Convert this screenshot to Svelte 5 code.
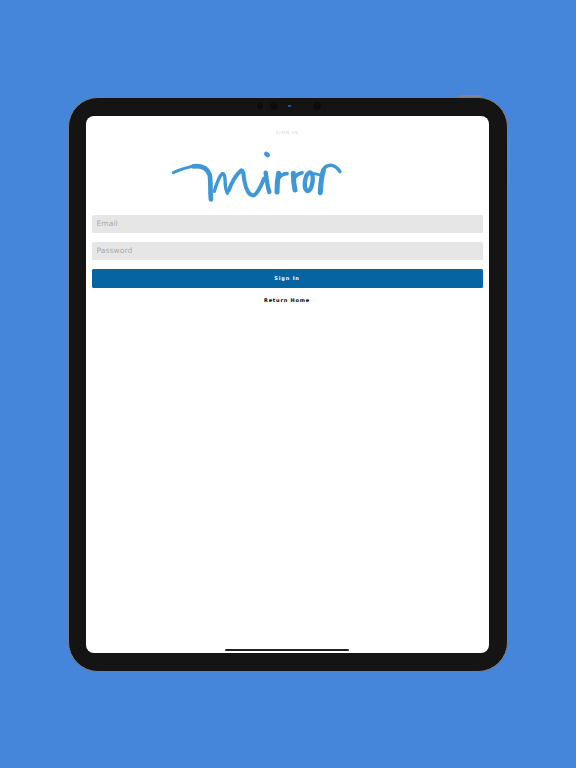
<script lang="ts">
  let email = $state('');
  let password = $state('');
</script>

<main class="page">
  <div class="tablet">
    <div class="btn-top"></div>
    <div class="btn-side one"></div>
    <div class="btn-side two"></div>

    <div class="sensors">
      <span class="cam"></span>
      <span class="cam big"></span>
      <span class="led"></span>
      <span class="cam big far"></span>
    </div>

    <div class="screen">
      <p class="title">SIGN IN</p>

      <svg class="logo" viewBox="0 0 570 210" role="img" aria-label="mirror" fill="none" stroke="#3d97d8" stroke-linecap="round" stroke-linejoin="round">
        <path stroke-width="9" d="M40 98C62 88 84 80 106 78" />
        <path stroke-width="14" d="M100 79C124 76 142 84 149 104C153 126 150 156 153 178" />
        <path stroke-width="10" d="M163 154C170 130 178 108 187 101C196 100 195 122 196 136C197 146 199 154 202 160" />
        <path stroke-width="12" d="M206 152C214 130 226 106 244 91C252 92 250 110 254 126C258 150 268 168 282 166C296 158 304 134 312 116" />
        <path stroke-width="13" d="M317 98C320 118 322 138 328 156" />
        <path stroke-width="14" d="M319 42L323 45" />
        <path stroke-width="15" d="M356 100C352 120 351 138 351 156" />
        <path stroke-width="11" d="M354 116C362 106 370 101 381 101" />
        <path stroke-width="15" d="M400 100C400 118 402 136 405 150" />
        <path stroke-width="11" d="M404 112C410 104 418 100 426 98" />
        <path stroke-width="13" d="M447 99C434 106 430 142 440 152C452 158 460 130 458 108C456 98 450 96 447 99" />
        <path stroke-width="8" d="M456 100C464 100 472 102 482 106" />
        <path stroke-width="15" d="M481 158C482 132 484 112 490 92" />
        <path stroke-width="10" d="M488 92C494 80 504 75 516 76C526 78 534 86 540 95" />
      </svg>

      <form class="form" onsubmit={(e) => e.preventDefault()}>
        <input class="field" type="email" placeholder="Email" bind:value={email} />
        <input class="field" type="password" placeholder="Password" bind:value={password} />
        <button class="submit" type="submit">Sign In</button>
      </form>

      <button class="return" type="button">Return Home</button>

      <div class="home-bar"></div>
    </div>
  </div>
</main>

<style>
  :global(body) {
    margin: 0;
    background: #4585da;
  }

  .page {
    display: flex;
    height: 768px;
    padding: 97px 0 0 68px;
    box-sizing: border-box;
    font-family: "DejaVu Sans", Inter, "Liberation Sans", sans-serif;
    text-rendering: geometricPrecision;
  }

  .tablet {
    position: relative;
    width: 440px;
    height: 575px;
    box-sizing: border-box;
    padding: 17.5px 18.5px 17px 16.5px;
    background: #141414;
    border: 1.5px solid #7d7d80;
    border-radius: 30px;
  }

  .btn-top {
    position: absolute;
    top: -3px;
    right: 25.5px;
    width: 24px;
    height: 1.5px;
    background: #7f8590;
  }

  .btn-side {
    position: absolute;
    right: -3px;
    width: 1.5px;
    background: #7f8590;
  }

  .btn-side.one {
    top: 39.5px;
    height: 22px;
  }

  .btn-side.two {
    top: 63.5px;
    height: 21px;
  }

  .sensors {
    position: absolute;
    top: 3px;
    left: 188px;
    display: flex;
    align-items: center;
    height: 10px;
  }

  .cam {
    width: 6px;
    height: 6px;
    margin-right: 7px;
    border-radius: 50%;
    background: #0c0c0c;
  }

  .cam.big {
    width: 8px;
    height: 8px;
  }

  .cam.far {
    margin: 0 0 0 22px;
  }

  .led {
    width: 3px;
    height: 2px;
    margin-left: 3px;
    background: #2d4f86;
  }

  .screen {
    position: relative;
    display: flex;
    flex-direction: column;
    height: 537px;
    box-sizing: border-box;
    padding: 0 6px;
    background: #fff;
    border-radius: 8px;
  }

  .title {
    margin: 14px 0 0;
    font-size: 4.5px;
    line-height: 7px;
    letter-spacing: 0.8px;
    text-align: center;
    color: #d4d4d4;
  }

  .logo {
    display: block;
    width: 190px;
    height: 70px;
    margin: 3px 0 5px 68px;
  }

  .form {
    display: flex;
    flex-direction: column;
    gap: 9px;
  }

  .field {
    height: 18px;
    padding: 0 5px;
    box-sizing: border-box;
    background: #e6e6e6;
    border: 0;
    border-radius: 1.5px;
    font: inherit;
    font-size: 7.5px;
    letter-spacing: 0.1px;
    color: #333;
    outline: none;
  }

  .field::placeholder {
    color: #aaa;
  }

  .submit {
    height: 19px;
    padding: 0;
    background: #0764a3;
    border: 0;
    border-radius: 1.5px;
    font: inherit;
    font-size: 5px;
    font-weight: 700;
    letter-spacing: 0.85px;
    color: #fff;
  }

  .return {
    align-self: center;
    margin-top: 9px;
    padding: 0;
    background: none;
    border: 0;
    font: inherit;
    font-size: 5px;
    line-height: 7px;
    font-weight: 700;
    letter-spacing: 0.8px;
    color: #000;
  }

  .home-bar {
    position: absolute;
    left: 139px;
    bottom: 2px;
    width: 124px;
    height: 2px;
    background: #222;
    border-radius: 1px;
  }
</style>
